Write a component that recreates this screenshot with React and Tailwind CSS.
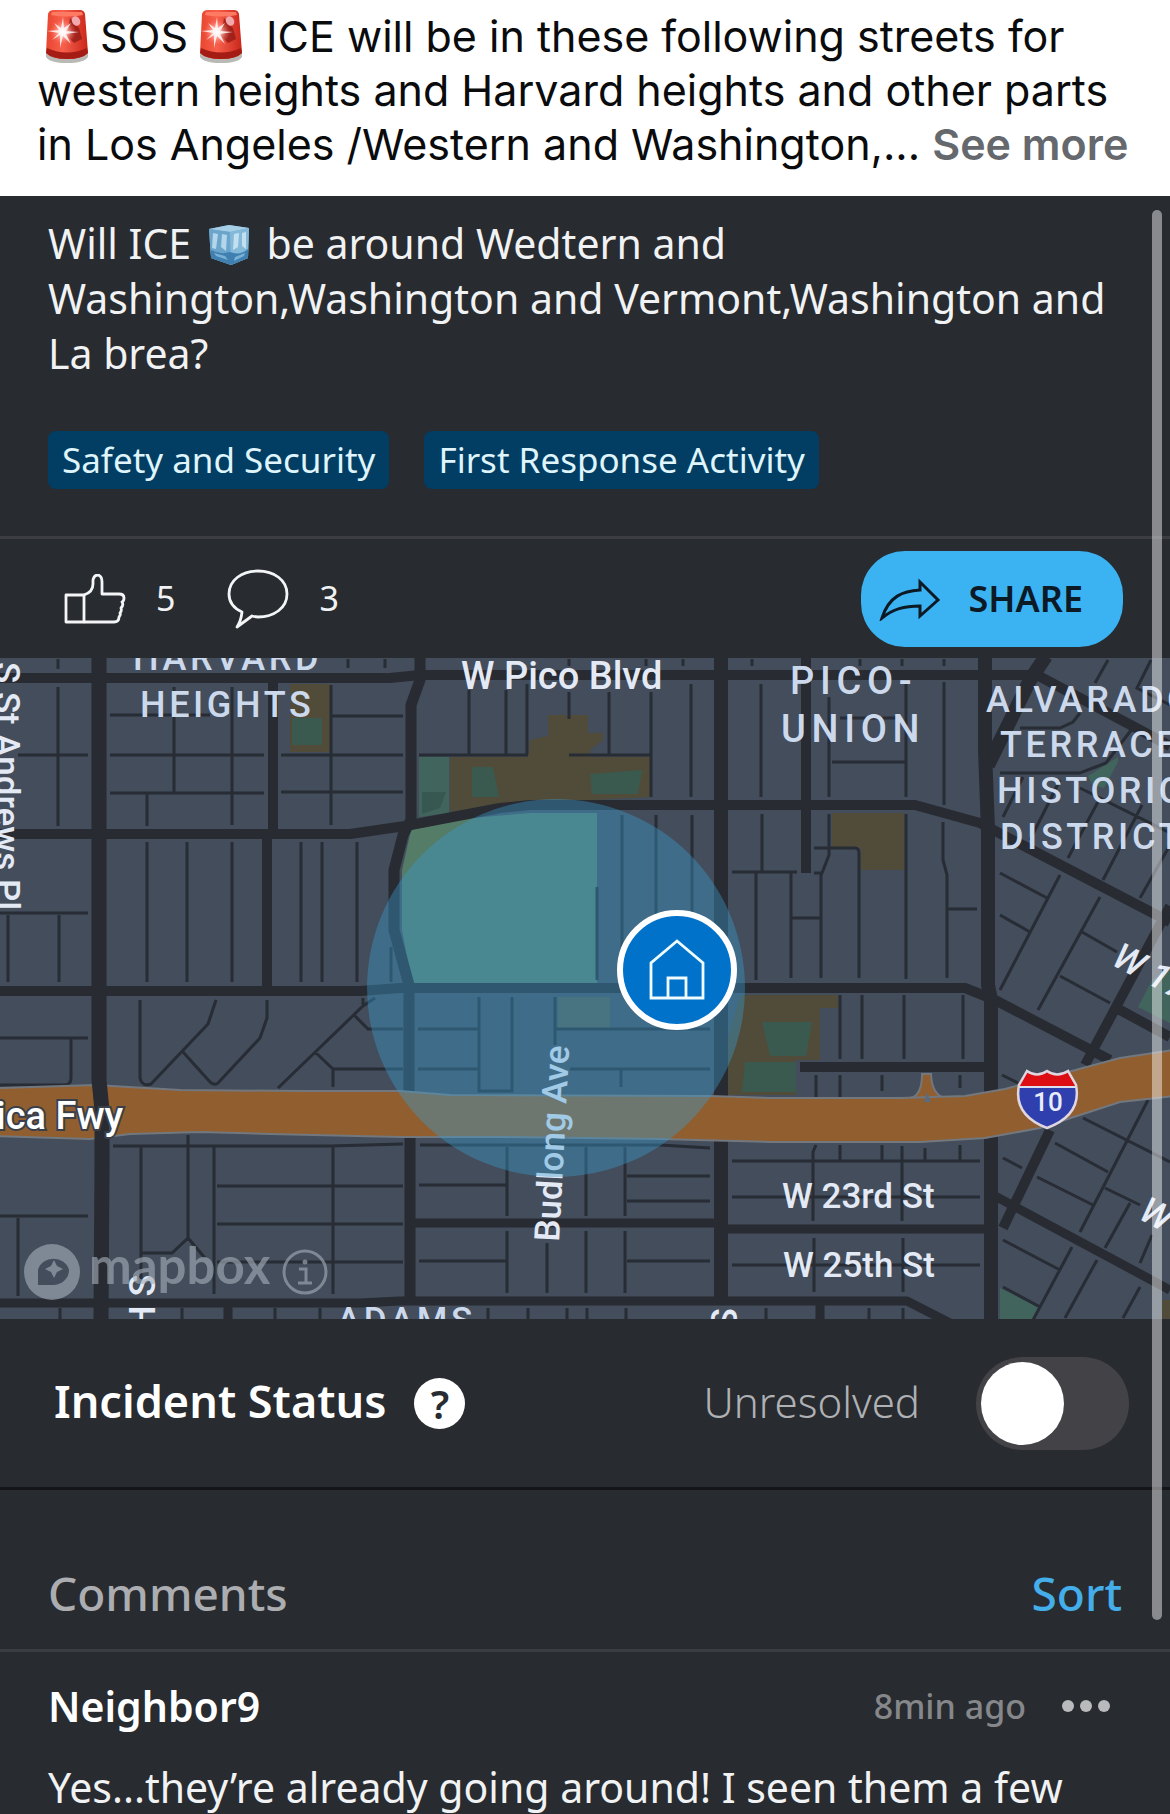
import React, { useState } from "react"

const Siren = () => (
  <svg viewBox="0 0 42 53" className="inline-block w-[42px] h-[53px] align-[-11px]" aria-label="siren" role="img">
    <defs>
      <linearGradient id="dome" x1="0" x2="1">
        <stop offset="0" stopColor="#e8452f" />
        <stop offset="0.4" stopColor="#f7604c" />
        <stop offset="1" stopColor="#c9261a" />
      </linearGradient>
      <radialGradient id="flash">
        <stop offset="0" stopColor="#ffffff" />
        <stop offset="0.3" stopColor="#ffc4c0" stopOpacity="0.9" />
        <stop offset="1" stopColor="#ff6a5c" stopOpacity="0" />
      </radialGradient>
    </defs>
    <path d="M0 43 Q21 53 42 43 V47 Q38 53 21 53 Q4 53 0 47Z" fill="#b9bab6" />
    <path d="M2 4 Q3 0 8 0 H34 Q38 0 39 4 L42 43 Q36 49 21 49 Q6 49 0 43Z" fill="url(#dome)" />
    <path d="M1 38 Q21 47 41 38 L42 43 Q36 49 21 49 Q6 49 0 43Z" fill="#a51c14" />
    <path d="M6 2 H36 L37 5 Q21 8 5 5Z" fill="#ff7a63" />
    <path d="M24 8 L33 18 L36 29 L28 33 L21 26Z" fill="#8e1a14" opacity="0.75" />
    <ellipse cx="30" cy="11" rx="4" ry="5" fill="#f2a9ae" transform="rotate(-30 30 11)" />
    <circle cx="17" cy="22" r="13" fill="url(#flash)" />
    <path d="M17 7 L18 18 L25 13 L20 21 L33 22 L20 24 L25 34 L17 26 L14 38 L14 25 L6 30 L13 23 L1 21 L13 20 L8 13 L15 18Z" fill="#fff" opacity="0.8" />
  </svg>
)

const IceCube = () => (
  <svg viewBox="0 0 42 40" className="inline-block w-[42px] h-10 align-[-6px]" aria-label="ice" role="img">
    <path d="M1 4 L21 0 L41 3 L40 33 L23 40 L3 33Z" fill="#6fa9cf" />
    <path d="M1 4 L21 0 L41 3 L22 7Z" fill="#a5cfe6" />
    <path d="M1 4 L22 7 L23 40 L3 33Z" fill="#6ba5cc" />
    <path d="M22 7 L41 3 L40 33 L23 40Z" fill="#84b9da" />
    <path d="M5 8 L10 9 L8 24 L4 23Z M14 9 L19 10 L18 26 L13 22Z" fill="#b3d6ea" />
    <path d="M26 9 L31 8 L30 22 L25 25Z M34 8 L38 7 L38 24 L34 21Z" fill="#c3e0f0" />
    <path d="M3 25 Q12 30 22 27 Q32 31 40 24 L40 33 L23 40 L3 33Z" fill="#3f80b0" />
    <path d="M6 28 L17 31 L20 35 L8 31Z M27 32 L37 28 L36 31 L26 36Z" fill="#79b2d6" />
  </svg>
)

const ThumbIcon = () => (
  <svg viewBox="0 0 62 50" className="w-[62px] h-[50px]" fill="none" stroke="#f4f5f6" strokeWidth="2.8" strokeLinejoin="round">
    <path d="M2 21 H20 V48 H2Z" />
    <path d="M20 21 Q29 18 29 10 V6 Q30 1 34 1 Q38 2 38 8 V20 H55 Q60 20 60 24 Q60 27 58 28 Q60 31 57 34 Q58 37 56 39 Q57 41 55 43 Q55 48 50 48 H20" />
  </svg>
)

const BubbleIcon = () => (
  <svg viewBox="0 0 62 60" className="w-[62px] h-[60px]" fill="none" stroke="#f4f5f6" strokeWidth="2.8" strokeLinejoin="round">
    <path d="M15 43 Q2 37 2 25 C2 11 15 2 31 2 C47 2 60 11 60 25 C60 39 47 48 31 48 Q28 48 25 47 L10 58 Q14 52 15 43Z" />
  </svg>
)

const ShareIcon = () => (
  <svg viewBox="0 0 62 44" className="w-[62px] h-11" fill="none" stroke="#0c1a26" strokeWidth="3">
    <path d="M3 41 C10 19 24 14 41 13 V5 L59 23 L41 39 V29 C25 29 14 32 3 41Z" />
  </svg>
)

const MINOR = `M58 687V826 M58 659V669 M18 755H88 M0 913H88 M8 915V982 M59 915V982
  M110 715H210 M174 687V792 M232 687V825 M110 755H264 M110 793H264 M147 793V826
  M147 842V982 M187 842V982 M232 842V982 M331 685V825 M331 716H403 M281 755H403 M281 792H403
  M301 842V982 M322 842V982 M357 842V982 M391 947V982 M348 659V668 M385 659V668
  M469 690V754 M506 690V754 M527 684V754 M419 755H528 M569 692V719 M609 692V754 M651 692V797 M569 755H650
  M691 684V797 M761 684V797 M597 887V980 M622 815V980 M656 815V930 M692 815V930 M762 814V872
  M732 872H797 M756 872V980 M569 659V666 M646 659V666 M683 659V666 M752 659V666
  M829 697V797 M829 814V855L822 873H814 M832 762H905 M840 718H900 M906 680V797 M906 814V979
  M944 682V805 M943 822V860L947 875V978 M947 909H977 M814 848H855Q859 848 859 853V978
  M791 873V978 M821 873V978 M791 918H821 M860 659V666 M902 659V666 M944 659V666
  M1108 660L1095 683 M1151 660L1137 688L1170 705 M1020 728H1060L1073 722L1080 713
  M1000 773H1080L1106 763L1135 725 M1003 817L1023 777 M1030 840L1060 780 M1068 858L1100 798
  M1103 880L1142 805 M1140 898L1170 845 M1080 788L1170 833 M1000 873L1047 898 M1000 915L1030 932
  M1060 875L1000 990 M1100 897L1038 1010 M1082 932L1117 952 M1060 976L1110 1003
  M840 995V1059 M862 995V1059 M904 995V1059 M963 995V1059 M816 1075V1097 M840 1075V1097 M882 1075V1091 M960 1075V1088
  M732 1161H980 M816 1145L813 1152V1221 M840 1145V1160 M882 1145V1160 M925 1148V1160 M960 1145V1160 M902 1146V1221
  M732 1197H980 M814 1238V1292 M903 1238V1292 M732 1265H980 M869 1308V1319 M903 1308V1319
  M1083 1118L1170 1162 M1055 1143L1108 1172 M1037 1177L1093 1205 M1003 1158L1022 1168 M1148 1100L1080 1232
  M1105 1188L1140 1205 M1130 1203L1105 1248 M1003 1240L1060 1270 M1072 1247L1033 1320 M1097 1260L1065 1318
  M1152 1235L1140 1263 M1140 1287L1123 1318 M1003 1287L1040 1307 M1002 1075L1018 1083
  M0 1038H88 M71 1038V1078Q71 1085 64 1085H0 M140 1000V1078Q142 1087 151 1084L208 1024L216 1000
  M267 1000V1018L260 1038L218 1083Q215 1086 210 1082L183 1052 M278 1088L363 1006L375 998
  M363 998V1006 M353 1014L368 1029H403 M315 1052L333 1069H403 M333 1069V1087
  M418 1029H478 M418 1069H478 M479 997V1091H512V997 M555 997V1045 M555 1029H710 M570 1069H710 M621 1069V1087
  M113 1146H330L403 1144 M141 1147V1290 M188 1135V1238L172 1253H141 M188 1238L205 1258 M214 1147V1294
  M217 1186H403 M217 1224H403 M217 1262H403 M333 1147V1294 M0 1216H88 M18 1218V1296
  M60 1308V1319 M182 1308V1319 M275 1308V1319 M320 1308V1319
  M420 1145H660L710 1148 M507 1147V1216 M586 1147V1216 M625 1147V1216 M419 1185H507 M627 1176H710 M627 1201H710
  M507 1231V1293 M547 1243V1293 M586 1231V1293 M625 1231V1293 M419 1261H507 M627 1261H710
  M488 1308V1319 M528 1308V1319 M567 1308V1319 M587 1308V1319 M626 1308V1319 M766 1308V1319`

const Map = () => (
  <svg
    viewBox="0 658 1170 661"
    preserveAspectRatio="xMidYMid slice"
    className="block w-full bg-[#434d5b] font-['Roboto',sans-serif] font-medium"
    role="img"
    aria-label="Incident map"
  >
    {/* schools and parks */}
    <g fill="#504c39">
      <path d="M290 684H331V752H290Z" />
      <path d="M450 757H528L530 740L548 736V715H588V733H603V740L590 750V757H651V797L590 800H530L450 812Z" />
      <path d="M832 813H904V870H861V848H832Z" />
      <path d="M740 995H838V1008H820V1060H796V1095H725V1050Z" />
      <path d="M1162 1300H1170V1319H1162Z" />
    </g>
    <g fill="#3b5a4f">
      <path d="M292 718H322V745H292Z" />
      <path d="M472 767H493L499 797H472Z" />
      <path d="M590 774L642 770L638 794H592Z" />
      <path d="M745 1062H796V1092H742Z M762 1022H812L806 1056H770Z" />
    </g>
    <path d="M419 757H449V813L419 817Z M1118 757L1088 776L1092 785L1104 788L1118 762Z M1170 970L1152 980L1138 1007L1170 1023Z M1000 1288L1040 1308L1034 1319H1000Z" fill="#41645c" />
    <path d="M422 792H446L440 808L422 814Z" fill="#365850" />
    <path d="M411 830L470 818L530 813H597V983H412L402 930V870Z" fill="#547c66" />
    <path d="M558 997H610V1028H558Z" fill="#525b4e" />

    {/* side streets */}
    <path d={MINOR} fill="none" stroke="#272c35" strokeWidth="3" />

    {/* main streets */}
    <g fill="none" stroke="#282b31" strokeWidth="10" strokeLinejoin="round">
      <path d="M0 678H390L420 675H1037L1170 746" />
      <path d="M0 834H350L405 826L500 808L530 805H915L980 823L1170 922" />
      <path d="M0 991H360L400 988H965L995 1000L1110 1060" />
      <path d="M273 678V834 M267 834V988" />
      <path d="M420 656V680L411 705V820L403 835L394 870V930L409 985V1093 M410 1137V1303" strokeWidth="11" />
      <path d="M721 656V1096 M721 1140V1303" strokeWidth="14" />
      <path d="M985 656V750L988 830V985L991 1000V1319" strokeWidth="14" />
      <path d="M1046 656L1030 680L1008 725L988 765" strokeWidth="14" />
      <path d="M806 656V873" />
      <path d="M1170 906L1085 1065 M1050 1130L1003 1228 M1120 1010L1170 1037" />
      <path d="M800 1067H990" />
      <path d="M410 1223H721 M721 1229H990 M995 1196L1170 1290" strokeWidth="9" />
      <path d="M0 1303H360L400 1301H907L950 1323 M228 1303V1319 M820 1303V1319" strokeWidth="9" />
    </g>

    {/* freeway */}
    <path d="M910 1098Q922 1096 922 1074H931Q932 1096 946 1098Z" fill="#915f2f" stroke="#73777e" strokeWidth="2" />
    <path
      d="M-4 1088L95 1085L180 1090L300 1091L400 1091L450 1095L710 1096L770 1098H900L965 1096L1005 1089L1120 1058L1174 1050V1096L1120 1102L1040 1128L985 1138L920 1142H770L660 1139L500 1137H400L270 1134L200 1132L130 1134L90 1139L-4 1136Z"
      fill="#915f2f"
      stroke="#73777e"
      strokeWidth="2"
    />
    <path d="M924 1102L927 1092L931 1102Z" fill="#5c6b80" />
    <path d="M99 656V1080L102 1110V1165L101 1319" fill="none" stroke="#282b31" strokeWidth="15" />

    {/* street names */}
    <g fill="#e4eaf5" fontSize="38">
      <text x="461" y="689">W Pico Blvd</text>
      <text x="782" y="1208" fontSize="35">W 23rd St</text>
      <text x="783" y="1277" fontSize="35">W 25th St</text>
      <text x="-4" y="1129" fill="#fff" stroke="#3a3f49" strokeWidth="4" paintOrder="stroke">ica Fwy</text>
      <text transform="translate(-5 662) rotate(90)" fontSize="35">S St Andrews Pl</text>
      <text transform="translate(559 1242) rotate(-87)" fontSize="35">Budlong Ave</text>
      <text transform="translate(1110 964) rotate(28)" fontSize="36" fontStyle="italic">W 17th St</text>
      <text transform="translate(1137 1218) rotate(28)" fontSize="36" fontStyle="italic">W 20th St</text>
      <text transform="translate(155 1331) rotate(-90)" fontSize="36">H S</text>
      <text transform="translate(737 1330) rotate(-90)" fontSize="36">S</text>
    </g>

    {/* neighborhoods */}
    <g fill="#ccd9ec" fontSize="36" className="tracking-widest">
      <text x="133" y="670">HARVARD</text>
      <text x="140" y="717">HEIGHTS</text>
      <text x="986" y="712">ALVARADO</text>
      <text x="1000" y="757">TERRACE</text>
      <text x="997" y="803">HISTORIC</text>
      <text x="1000" y="849">DISTRICT</text>
      <text x="337" y="1332" fontSize="35">ADAMS</text>
    </g>
    <g fill="#ccd9ec" fontSize="38" className="tracking-[0.15em]">
      <text x="790" y="694">PICO-</text>
      <text x="781" y="742">UNION</text>
    </g>

    {/* interstate shield */}
    <path d="M1027 1071Q1037 1078 1047 1071Q1057 1078 1068 1071L1076 1085Q1082 1115 1047 1128Q1013 1115 1019 1085Z" fill="#2f3fae" />
    <path d="M1027 1071Q1037 1078 1047 1071Q1057 1078 1068 1071Q1072 1080 1076 1086H1019Q1023 1080 1027 1071Z" fill="#dd0d14" />
    <path d="M1019 1087H1076" stroke="#dcdfee" strokeWidth="2" />
    <path d="M1027 1071Q1037 1078 1047 1071Q1057 1078 1068 1071L1076 1085Q1082 1115 1047 1128Q1013 1115 1019 1085Z" fill="none" stroke="#dfd6e0" strokeWidth="2.5" />
    <text x="1048" y="1111" textAnchor="middle" fontSize="26" fill="#e9edfa">10</text>

    {/* search area */}
    <circle cx="556" cy="988" r="189" fill="#3a9bd0" fillOpacity="0.4" />

    {/* home pin */}
    <circle cx="677" cy="970" r="57" fill="#0072c9" stroke="#fff" strokeWidth="6" />
    <path d="M651 998V963L677 941L703 963V998Z M668 998V978H686V998" fill="none" stroke="#f0fbff" strokeWidth="2.8" />

    {/* attribution */}
    <g opacity="0.62">
      <path fillRule="evenodd" d="M52 1244A28 28 0 1 0 52 1300A28 28 0 1 0 52 1244Z M38 1285V1270A16 15 0 0 1 69 1270A16 15 0 0 1 54 1285Z" fill="#a4aeb9" />
      <path d="M54 1260L57 1266L63 1269L57 1272L54 1278L51 1272L45 1269L51 1266Z" fill="#a4aeb9" />
      <text x="89" y="1284" fontSize="51" fill="#a4aeb9" className="font-['Lato',sans-serif] font-bold">mapbox</text>
      <circle cx="305" cy="1272" r="21" fill="none" stroke="#a4aeb9" strokeWidth="3" />
      <path d="M299 1269H306V1283 M298 1283H312" fill="none" stroke="#a4aeb9" strokeWidth="3" />
      <circle cx="305" cy="1262" r="2.5" fill="#a4aeb9" />
    </g>
  </svg>
)

const App = () => {
  const [resolved, setResolved] = useState(false)

  return (
    <div className="w-full h-screen overflow-hidden flex flex-col bg-[#282b30]">
      <p className="shrink-0 bg-white text-[#0a0b0c] px-[37px] pt-[9px] pb-[25px] text-[43px] leading-[54px] whitespace-nowrap font-['Inter',sans-serif]">
        <span className="pl-[9px]"><Siren /></span>
        <span className="px-3">SOS</span>
        <Siren />
        <span className="pl-6">ICE will be in these following streets for</span>
        <br />
        western heights and Harvard heights and other parts
        <br />
        in Los Angeles /Western and Washington,...{" "}
        <button className="font-semibold text-[#65686c]">See more</button>
      </p>

      <main className="relative shrink-0 text-[#f1f2f3] font-['Noto_Sans',sans-serif]">
        <div className="px-12 pt-5 pb-[47px] border-b-3 border-[#3b3d42]">
          <p className="text-[41px] leading-[55px] whitespace-nowrap">
            Will ICE <span className="px-1.5"><IceCube /></span> be around Wedtern and
            <br />
            Washington,Washington and Vermont,Washington and
            <br />
            La brea?
          </p>
          <div className="flex gap-[35px] mt-[50px] text-[35px] leading-[58px] text-[#dff4fb]">
            <span className="px-3.5 rounded-lg bg-[#023e63]">Safety and Security</span>
            <span className="px-3.5 rounded-lg bg-[#023e63]">First Response Activity</span>
          </div>
        </div>

        <div className="flex items-center justify-between h-[119px] pl-16 pr-[47px] text-[34px]">
          <div className="flex items-center gap-[52px]">
            <button className="flex items-center gap-[30px]"><ThumbIcon />5</button>
            <button className="flex items-center gap-[30px]"><BubbleIcon />3</button>
          </div>
          <button className="flex items-center gap-7 h-24 pl-[18px] pr-10 rounded-[44px] bg-[#3bb3f2] text-[36px] text-[#0c1a26] font-semibold">
            <ShareIcon />SHARE
          </button>
        </div>

        <Map />

        <div className="flex items-center justify-between h-[171px] pl-[54px] pr-[41px] border-b-3 border-[#141518]">
          <div className="flex items-center gap-7">
            <h2 className="pb-1 text-[45px] font-semibold text-white">Incident Status</h2>
            <button className="size-[51px] rounded-full bg-white text-[#282b30] text-[40px] leading-[51px] font-semibold">?</button>
          </div>
          <label className="flex items-center gap-14 text-[42px] font-light text-[#b0b1b4]">
            <span className="pb-1">Unresolved</span>
            <input
              type="checkbox"
              checked={resolved}
              onChange={() => setResolved(!resolved)}
              className="appearance-none w-[153px] h-[93px] p-[5px] rounded-full bg-[#434347] before:block before:size-[83px] before:rounded-full before:bg-white"
            />
          </label>
        </div>

        <div className="flex items-end justify-between h-[162px] px-12 pb-[26px] border-b-3 border-[#3b3d42] text-[46px] leading-[60px] font-medium">
          <h2 className="text-[#acadb0]">Comments</h2>
          <button className="text-[#44aeea]">Sort</button>
        </div>

        <div className="px-12 pt-6">
          <div className="flex items-center justify-between">
            <h3 className="text-[41px] leading-[60px] font-semibold text-white">Neighbor9</h3>
            <div className="flex items-center gap-9 pr-3 text-[34px] font-medium text-[#85878a]">
              8min ago
              <button aria-label="More" className="flex gap-1.5">
                <span className="size-3 rounded-full bg-[#b9babc]"></span>
                <span className="size-3 rounded-full bg-[#b9babc]"></span>
                <span className="size-3 rounded-full bg-[#b9babc]"></span>
              </button>
            </div>
          </div>
          <p className="mt-6 text-[41px] leading-[54px] whitespace-nowrap">Yes...they’re already going around! I seen them a few</p>
        </div>

        {/* scroll indicator */}
        <div className="absolute top-3.5 right-2 w-2.5 h-[1410px] rounded-full bg-white/45"></div>
      </main>
    </div>
  )
}

export default App
